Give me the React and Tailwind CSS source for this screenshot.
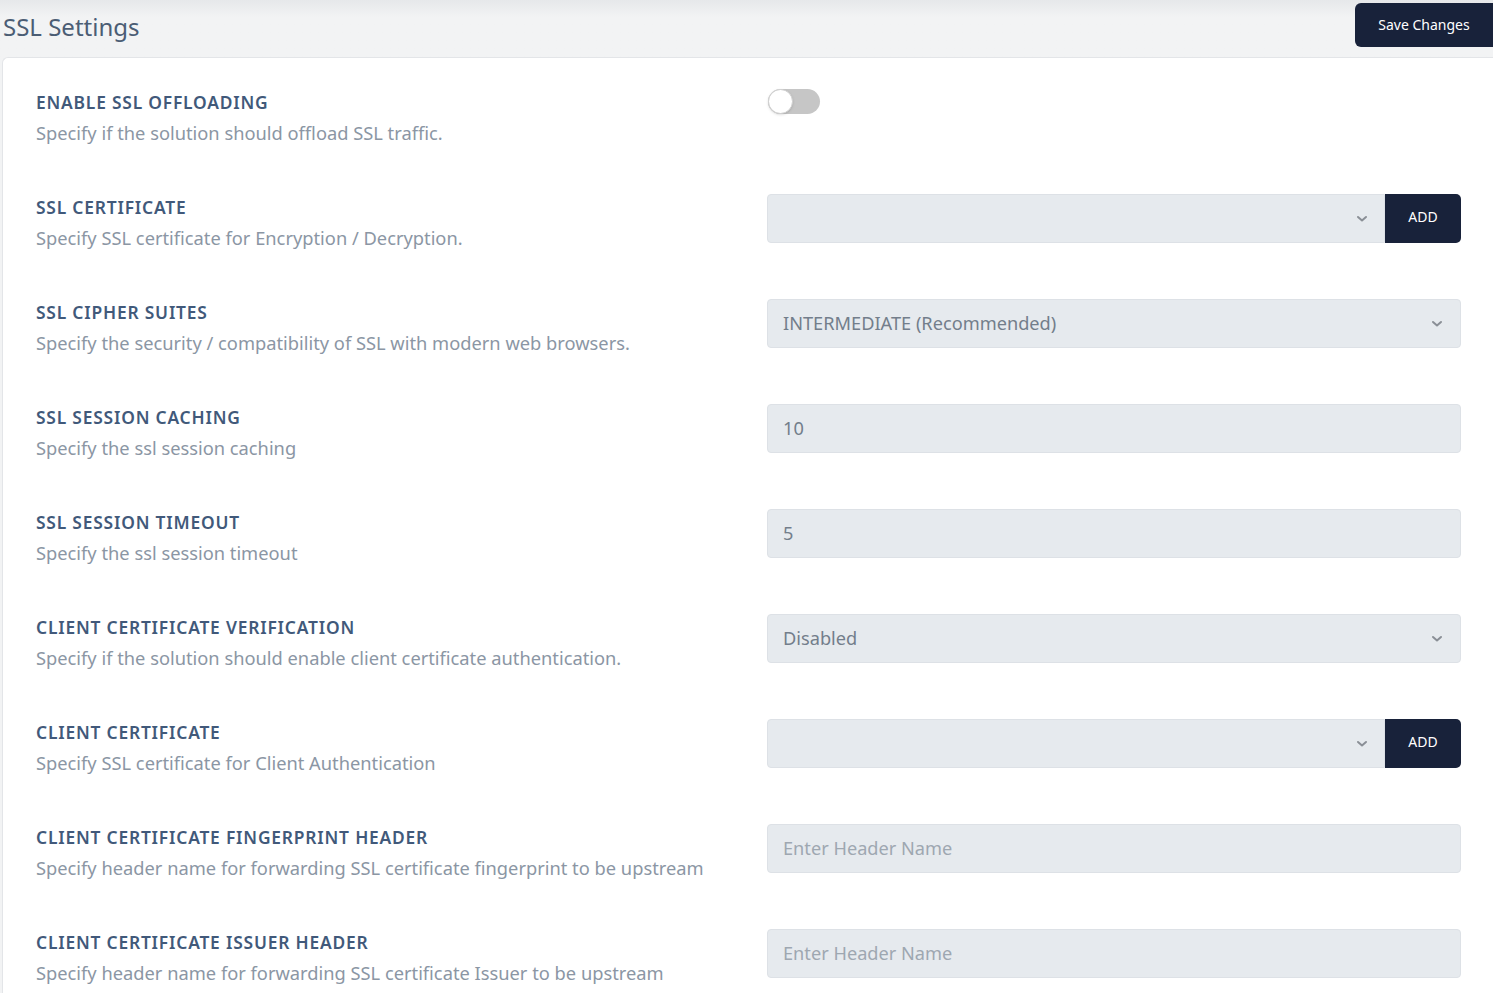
import React from "react";

const Chevron = () => (
  <svg width="12" height="8" viewBox="0 0 12 8" className="shrink-0">
    <path d="M2 2 L6 5.5 L10 2" fill="none" stroke="#8a8f96" strokeWidth="2" strokeLinecap="round" strokeLinejoin="round" />
  </svg>
);

const rows = [
  { t: "ENABLE SSL OFFLOADING", d: "Specify if the solution should offload SSL traffic.", c: "toggle" },
  { t: "SSL CERTIFICATE", d: "Specify SSL certificate for Encryption / Decryption.", c: "selectAdd" },
  { t: "SSL CIPHER SUITES", d: "Specify the security / compatibility of SSL with modern web browsers.", c: "select", v: "INTERMEDIATE (Recommended)" },
  { t: "SSL SESSION CACHING", d: "Specify the ssl session caching", c: "input", v: "10" },
  { t: "SSL SESSION TIMEOUT", d: "Specify the ssl session timeout", c: "input", v: "5" },
  { t: "CLIENT CERTIFICATE VERIFICATION", d: "Specify if the solution should enable client certificate authentication.", c: "select", v: "Disabled" },
  { t: "CLIENT CERTIFICATE", d: "Specify SSL certificate for Client Authentication", c: "selectAdd" },
  { t: "CLIENT CERTIFICATE FINGERPRINT HEADER", d: "Specify header name for forwarding SSL certificate fingerprint to be upstream", c: "ph", v: "Enter Header Name" },
  { t: "CLIENT CERTIFICATE ISSUER HEADER", d: "Specify header name for forwarding SSL certificate Issuer to be upstream", c: "ph", v: "Enter Header Name" },
];

function Control({ r }) {
  if (r.c === "toggle") {
    return (
      <div className="h-[25px] w-[52px] rounded-full bg-[#c6c6c6] flex items-center ml-[1px] mt-[-1px]">
        <div className="h-[25px] w-[25px] rounded-full bg-white border border-[#d0d0d0] shadow-sm" />
      </div>
    );
  }
  const box = "h-[49px] bg-[#e6eaee] border border-[#dde1e6] flex items-center px-[15px] mt-[-1px]";
  if (r.c === "selectAdd") {
    return (
      <div className="flex mt-[-1px]">
        <div className="h-[49px] flex-1 bg-[#e6eaee] border border-[#dde1e6] rounded-l-[4px] flex items-center justify-end pr-[16px]">
          <Chevron />
        </div>
        <div className="h-[49px] w-[76px] bg-[#18223a] rounded-r-[5px] flex items-center justify-center text-white text-[14px] pb-[5px]">
          ADD
        </div>
      </div>
    );
  }
  if (r.c === "select") {
    return (
      <div className={box + " rounded-[4px] justify-between pr-[17px]"}>
        <span className="text-[18.2px] text-[#737e8b]">{r.v}</span>
        <Chevron />
      </div>
    );
  }
  return (
    <div className={box + " rounded-[4px]"}>
      <span className={"text-[18.2px] " + (r.c === "ph" ? "text-[#9ea7b1]" : "text-[#737e8b]")}>{r.v}</span>
    </div>
  );
}

export default function App() {
  return (
    <div className="w-[1493px] h-[993px] overflow-hidden bg-[#f2f3f4]" style={{ fontFamily: "'Noto Sans', 'Liberation Sans', sans-serif" }}>
      <div className="h-[57px] flex items-start justify-between bg-gradient-to-b from-[#e6e8ea] to-[#f2f3f4] to-[30%]">
        <div className="pl-[3px] pt-[11px] text-[24px] leading-[32px] text-[#4b5d74]">SSL Settings</div>
        <div className="mt-[3px] h-[44px] w-[138px] rounded-l-[6px] bg-[#18223a] text-white text-[14px] flex items-center justify-center pb-[2px]">
          Save Changes
        </div>
      </div>
      <div className="ml-[2px] bg-white border-l border-t border-[#e3e5e8] rounded-tl-[6px] h-[936px] pt-[32px] pl-[33px] pr-[32px]">
        <div className="flex flex-col gap-[49px]">
          {rows.map((r, i) => (
            <div key={i} className="flex items-start">
              <div className="w-[731px] shrink-0">
                <div className="text-[17.4px] leading-[24px] font-semibold tracking-[0.8px] text-[#41597a]">{r.t}</div>
                <div className="mt-[6px] text-[18.3px] leading-[26px] text-[#8b96a4]">{r.d}</div>
              </div>
              <div className="flex-1">
                <Control r={r} />
              </div>
            </div>
          ))}
        </div>
      </div>
    </div>
  );
}
